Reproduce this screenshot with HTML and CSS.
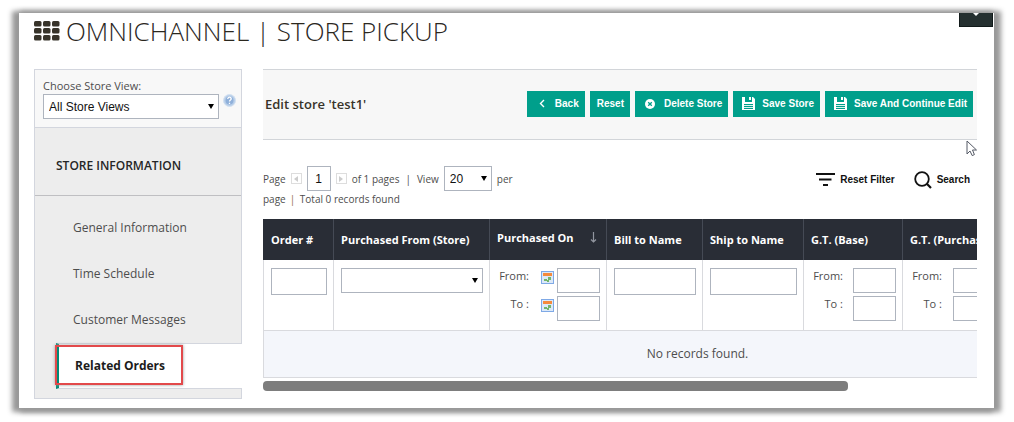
FILE: index.html
```html
<!DOCTYPE html>
<html lang="en">
<head>
<meta charset="utf-8">
<title>Omnichannel | Store Pickup</title>
<link rel="stylesheet" href="styles.css">
</head>
<body>
<svg class="defs" width="0" height="0" aria-hidden="true">
  <symbol id="floppy" viewBox="0 0 13 13">
    <path d="M0 0h3v5h7V0h1l2 2v11H0z" fill="#fff"/>
    <path d="M7 0h2v3H7z" fill="#fff"/>
    <path d="M2 7h9v5H2z" fill="#009f8b"/>
    <path d="M2 8.500h9M2 10.500h9" stroke="#d9f3ee" stroke-width="1"/>
  </symbol>
  <symbol id="calendar" viewBox="0 0 13 13">
    <path d="M0 0h13v13H0z" fill="#7fa9e6"/>
    <path d="M1 1h11v11H1z" fill="#dce9f8"/>
    <path d="M2 2h9v3H2z" fill="#f58a3c"/>
    <path d="M3 8h3v2H3zM7 6h3v3H7zM6 9h2v2H6z" fill="#73b56b"/>
  </symbol>
</svg>
<div class="page">
  <header class="title">
    <svg width="26" height="21" viewBox="0 0 26 21" fill="#37332a" aria-hidden="true">
      <rect x="0" y="0" width="7.500" height="5.500" rx="1.500"/><rect x="9" y="0" width="7.500" height="5.500" rx="1.500"/><rect x="18" y="0" width="7.500" height="5.500" rx="1.500"/>
      <rect x="0" y="7" width="7.500" height="5.500" rx="1.500"/><rect x="9" y="7" width="7.500" height="5.500" rx="1.500"/><rect x="18" y="7" width="7.500" height="5.500" rx="1.500"/>
      <rect x="0" y="14" width="7.500" height="5.500" rx="1.500"/><rect x="9" y="14" width="7.500" height="5.500" rx="1.500"/><rect x="18" y="14" width="7.500" height="5.500" rx="1.500"/>
    </svg>
    <h1>OMNICHANNEL | STORE PICKUP</h1>
    <button class="corner" type="button" aria-label="Open menu"><svg width="10" height="6" viewBox="0 0 10 6"><path d="M2 0h6L5 3z" fill="#fff"/></svg></button>
  </header>
  <div class="columns">
    <aside class="sidebar">
      <div class="scope">
        <label for="scope">Choose Store View:</label>
        <div class="scope-row">
          <span class="select"><select id="scope"><option>All Store Views</option></select></span>
          <svg width="13" height="13" viewBox="0 0 13 13" aria-hidden="true"><circle cx="6.500" cy="6.500" r="6" fill="#b9cfe9" stroke="#d3e0f0"/><circle cx="6.500" cy="6.500" r="4" fill="#8fb0da"/><path d="M4.800 5c0-2.500 3.600-2.300 3.400 0C8.100 6.200 6.500 6 6.500 7.600M6.500 8.800v1.200" stroke="#fff" stroke-width="1.300" fill="none"/></svg>
        </div>
      </div>
      <h2>STORE INFORMATION</h2>
      <nav>
        <a href="#general">General Information</a>
        <a href="#schedule">Time Schedule</a>
        <a href="#messages">Customer Messages</a>
        <a class="active" href="#orders">Related Orders</a>
      </nav>
    </aside>
    <main>
      <section class="toolbar">
        <h3>Edit store 'test1'</h3>
        <div class="actions">
          <button class="btn back" type="button"><svg width="6" height="9" viewBox="0 0 6 9"><path d="M5 1L1.500 4.500 5 8" fill="none" stroke="#fff" stroke-width="1.400"/></svg>Back</button>
          <button class="btn" type="button">Reset</button>
          <button class="btn delete" type="button"><svg width="10" height="10" viewBox="0 0 10 10"><circle cx="5" cy="5" r="5" fill="#fff"/><path d="M3.200 3.200l3.600 3.600M6.800 3.200L3.200 6.800" stroke="#009f8b" stroke-width="1.300"/></svg>Delete Store</button>
          <button class="btn save" type="button"><svg width="13" height="13"><use href="#floppy"/></svg>Save Store</button>
          <button class="btn save" type="button"><svg width="13" height="13"><use href="#floppy"/></svg>Save And Continue Edit</button>
        </div>
        <svg class="cursor" width="12" height="17" viewBox="0 0 12 17" aria-hidden="true"><path d="M1 1v13l3-3 2.200 4.600 2.200-1L6.500 10H10.500z" fill="#fff" stroke="#555a66"/></svg>
      </section>
      <section class="controls">
        <div class="pager">
          <div class="line">
            <label for="page">Page</label>
            <button class="step" type="button" aria-label="Previous page"><svg width="4" height="6" viewBox="0 0 4 6"><path d="M4 0v6L0 3z" fill="#ccc"/></svg></button>
            <input id="page" class="page-no" value="1">
            <button class="step" type="button" aria-label="Next page"><svg width="4" height="6" viewBox="0 0 4 6"><path d="M0 0v6l4-3z" fill="#ccc"/></svg></button>
            <span>of 1 pages</span><span class="bar">|</span>
            <label for="limit">View</label>
            <span class="select limit"><select id="limit"><option>20</option></select></span>
            <span>per</span>
          </div>
          <div class="total">page<span class="gold">|</span> Total 0 records found</div>
        </div>
        <div class="filters">
          <button type="button"><svg width="19" height="13" viewBox="0 0 19 13"><path d="M0 1h19M3 6.500h12.500M7 12h5" stroke="#111" stroke-width="2"/></svg>Reset Filter</button>
          <button type="button"><svg width="18" height="18" viewBox="0 0 18 18"><circle cx="8" cy="8" r="6.800" fill="none" stroke="#111" stroke-width="1.800"/><path d="M12.800 12.800L17 17" stroke="#111" stroke-width="2.200"/></svg>Search</button>
        </div>
      </section>
      <div class="grid">
        <table>
          <colgroup><col class="c-order"><col class="c-from"><col class="c-on"><col class="c-bill"><col class="c-ship"><col class="c-base"><col></colgroup>
          <thead>
            <tr>
              <th>Order #</th>
              <th>Purchased From (Store)</th>
              <th><span class="sorted">Purchased On<svg width="7" height="11" viewBox="0 0 7 11"><path d="M3.500 0v10M1 7.500l2.500 2.500L6 7.500" fill="none" stroke="#9296a0" stroke-width="1.200"/></svg></span></th>
              <th>Bill to Name</th>
              <th>Ship to Name</th>
              <th>G.T. (Base)</th>
              <th>G.T. (Purchased)</th>
            </tr>
          </thead>
          <tbody>
            <tr class="filter">
              <td><input aria-label="Order #"></td>
              <td><span class="select"><select aria-label="Purchased From (Store)"><option></option></select></span></td>
              <td>
                <div class="range"><label for="on-from">From:</label><svg width="13" height="13"><use href="#calendar"/></svg><input id="on-from"></div>
                <div class="range"><label for="on-to">To :</label><svg width="13" height="13"><use href="#calendar"/></svg><input id="on-to"></div>
              </td>
              <td><input aria-label="Bill to Name"></td>
              <td><input aria-label="Ship to Name"></td>
              <td>
                <div class="range"><label for="base-from">From:</label><input id="base-from"></div>
                <div class="range"><label for="base-to">To :</label><input id="base-to"></div>
              </td>
              <td>
                <div class="range"><label for="pur-from">From:</label><input id="pur-from"></div>
                <div class="range"><label for="pur-to">To :</label><input id="pur-to"></div>
              </td>
            </tr>
            <tr class="empty"><td colspan="7">No records found.</td></tr>
          </tbody>
        </table>
      </div>
      <div class="thumb"></div>
    </main>
  </div>
</div>
</body>
</html>
```
FILE: styles.css
```css
*, *::after { box-sizing: border-box; }
body {
  margin: 0;
  padding: 13px 20px 14px 19px;
  background: #fff;
  color: #4d4d4d;
  font: 12px/18px "Open Sans", sans-serif;
}
.defs { position: absolute; }
h1, h2, h3 { margin: 0; }
svg { flex: none; }
button { margin: 0; padding: 0; border: 0; background: none; font: bold 10px/14px "Liberation Sans", Arial, sans-serif; }
input, select {
  display: block;
  width: 100%;
  height: 25px;
  margin: 0;
  padding: 0 5px;
  border: 1px solid #aeb4be;
  border-radius: 0;
  background: #fff;
  color: #111;
  font: 12px/16px "Liberation Sans", Arial, sans-serif;
}
select { appearance: none; }
.select { position: relative; display: block; }
.select::after {
  content: "";
  position: absolute;
  top: 10px;
  right: 5px;
  border: 3px solid transparent;
  border-top: 5px solid #000;
  border-bottom: 0;
  pointer-events: none;
}

.page {
  min-height: 395px;
  padding: 0 17px 9px 15px;
  background: #fff;
  box-shadow: 4px 1px 5px 3px #999, -4px 1px 5px 3px #999;
}
.title { display: flex; align-items: center; height: 56px; padding-bottom: 20px; gap: 6px; }
.title h1 { color: #2b271e; font-size: 26px; font-weight: 300; line-height: 36px; white-space: nowrap; }
.corner { align-self: flex-start; display: flex; justify-content: center; width: 34px; height: 14px; margin: 0 -16px 0 auto; border: 1px solid #111a1a; border-top: 0; background: #253030; }

.columns { display: grid; grid-template-columns: 208px minmax(0, 1fr); gap: 21px; align-items: start; }
.sidebar { border: 1px solid #d3d6de; background: #ededed; }
.scope { height: 58px; padding: 7px 5px 0 8px; border-bottom: 1px solid #d3d6de; background: #f8f8f8; }
.scope label { display: block; font-size: 11px; line-height: 17px; }
.scope-row { display: flex; gap: 4px; }
.scope .select { flex: 1; }
.sidebar h2 { height: 68px; padding: 28px 21px 0; border-bottom: 1px solid #bfbfc2; color: #262626; font-size: 12px; font-weight: 600; line-height: 20px; }
.sidebar nav { display: flex; flex-direction: column; margin: 9px -1px 9px 21px; }
.sidebar a { height: 46px; padding-left: 17px; color: #4d4d4d; line-height: 46px; text-decoration: none; }
.sidebar a.active { position: relative; padding-left: 16px; border: solid #d3d6de; border-width: 1px 0 1px 3px; border-left-color: #008a77; background: #fff; color: #1c1c1c; font-weight: 700; line-height: 44px; }
.sidebar a.active::after { content: ""; position: absolute; inset: 1px auto 3px -4px; width: 128px; border: 2px solid #e2494b; box-shadow: 0 0 3px #999; }

.toolbar { position: relative; display: flex; justify-content: space-between; align-items: center; height: 71px; padding: 0 4px 2px 2px; border: solid #d2d5d9; border-width: 1px 0; background: #f7f7f7; }
.toolbar h3 { color: #37332a; font-size: 13px; font-weight: 600; }
.actions { display: flex; gap: 5px; }
.btn { display: flex; align-items: center; height: 26px; padding: 0 6px 0 7px; background: #009f8b; color: #fff; white-space: nowrap; }
.back { gap: 10px; padding-left: 12px; }
.delete { gap: 9px; padding-left: 10px; }
.save { gap: 7px; padding-left: 9px; }
.cursor { position: absolute; right: -1px; bottom: -18px; }

.controls { display: flex; justify-content: space-between; height: 79px; padding: 26px 7px 0 0; font-size: 10px; }
.line { display: flex; align-items: center; height: 25px; gap: 5px; white-space: nowrap; }
.bar { padding: 0 1px; }
.step { display: flex; align-items: center; justify-content: center; width: 11px; height: 11px; border: 1px solid #ddd; }
.page-no { width: 24px; padding: 0; text-align: center; }
.limit { width: 48px; }
.total { line-height: 16px; }
.gold { padding: 0 2px 0 4px; color: #8a6d3b; }
.filters { display: flex; gap: 19px; height: 27px; }
.filters button { display: flex; align-items: center; gap: 5px; color: #111; white-space: nowrap; }

.grid { overflow: hidden; }
table { width: 868px; table-layout: fixed; border-collapse: separate; border-spacing: 0; }
.c-order { width: 71px; }
.c-from { width: 156px; }
.c-on { width: 117px; }
.c-bill { width: 96px; }
.c-ship { width: 101px; }
.c-base { width: 99px; }
th { height: 41px; padding: 0 7px; border-right: 1px solid #454a55; background: #292d36; color: #fff; font-size: 11px; font-weight: 700; text-align: left; white-space: nowrap; }
th:first-child { border-left: 1px solid #292d36; }
.sorted { display: flex; align-items: center; justify-content: space-between; padding: 0 2px 4px 0; }
.filter td { height: 71px; padding: 8px 6px 0 7px; border-right: 1px solid #d9dade; border-bottom: 1px solid #d9dade; vertical-align: top; }
.filter td > input { height: 27px; }
td:first-child { border-left: 1px solid #d9dade; }
.range { display: flex; justify-content: space-between; margin-bottom: 3px; padding-left: 2px; font-size: 11px; }
.range label { width: 30px; line-height: 16px; text-align: right; }
.range svg { margin: 3px -8px 0 0; }
.range input { width: 43px; }
td:last-child .range { width: 86px; }
.empty td { height: 47px; padding: 0; border-bottom: 1px solid #d9dade; background: #f4f6fb; text-align: center; }
.thumb { width: 82%; height: 10px; margin-top: 3px; border-radius: 4px; background: #7d7d7d; }
```
